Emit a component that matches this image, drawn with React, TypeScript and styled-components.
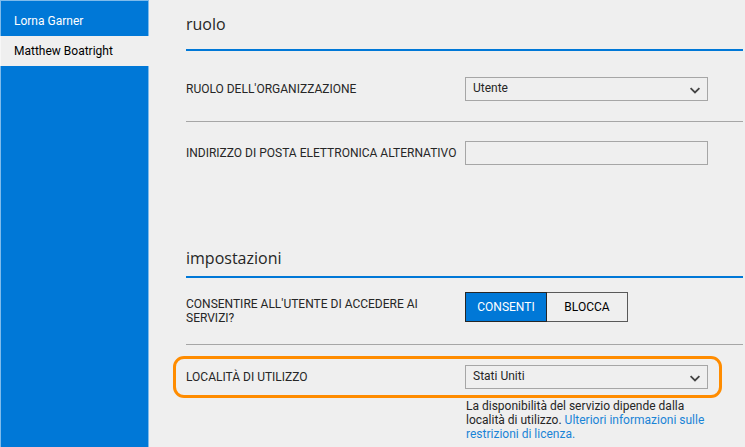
import React, { useState } from "react";
import styled, { createGlobalStyle } from "styled-components";

const GlobalStyle = createGlobalStyle`
  *, *::before, *::after { box-sizing: border-box; }
  html, body { margin: 0; background: #efefef; }
  body, button, input, select {
    font-family: Roboto, "Noto Sans", sans-serif;
    font-size: 12px;
    line-height: 14px;
    color: #262626;
  }
`;

const Page = styled.div`
  display: grid;
  grid-template-columns: 149px minmax(0, 1fr);
  min-height: 100vh;
`;

const Sidebar = styled.nav`
  background: #0078d7;
  border: solid #7fbbeb;
  border-width: 1px 1px 0 1px;
  padding-top: 5px;
`;

const UserLink = styled.a<{ $active?: boolean }>`
  display: block;
  margin: 0 -1px;
  padding: 8px 14px;
  border-left: 1px solid ${(p) => (p.$active ? "#f7f7f7" : "#7fbbeb")};
  border-right: 1px solid ${(p) => (p.$active ? "#efefef" : "#7fbbeb")};
  padding-left: 13px;
  text-decoration: none;
  color: ${(p) => (p.$active ? "#000" : "#fff")};
  background: ${(p) => (p.$active ? "#efefef" : "transparent")};
`;

const Main = styled.main`
  padding: 12px 2px 0 37px;
`;

const Title = styled.h2<{ $gap: number }>`
  margin: 0;
  padding-bottom: ${(p) => p.$gap}px;
  border-bottom: 2px solid #0078d7;
  font-family: "Open Sans", "Noto Sans", sans-serif;
  font-size: 16px;
  line-height: 24px;
  font-weight: 400;
`;

const Section = styled.section`
  & + & {
    margin-top: 81px;
  }
`;

const Row = styled.div<{ $top: number; $bottom?: number }>`
  position: relative;
  display: grid;
  grid-template-columns: 279px minmax(0, 243px);
  align-items: start;
  padding: ${(p) => p.$top}px 0 ${(p) => p.$bottom ?? 0}px;
  border-bottom: ${(p) => (p.$bottom ? "1px solid #a6a6a6" : "none")};
`;

const Highlight = styled.div`
  position: absolute;
  top: 11px;
  left: -13px;
  width: calc(min(100%, 522px) + 27px);
  height: 42px;
  border: 3px solid #ff8c00;
  border-radius: 11px;
  pointer-events: none;
`;

const Label = styled.label`
  padding: 5px 5px 0 0;
`;

const SelectWrap = styled.div`
  position: relative;
`;

const Select = styled.select`
  appearance: none;
  display: block;
  width: 100%;
  height: 24px;
  margin: 0;
  padding: 0 24px 2px 7px;
  border: 1px solid #a6a6a6;
  border-radius: 0;
  background: transparent;
`;

const Chevron = styled.svg`
  position: absolute;
  right: 7px;
  top: 9px;
  pointer-events: none;
`;

const TextInput = styled.input`
  display: block;
  width: 100%;
  height: 24px;
  margin: 0;
  padding: 0 7px;
  border: 1px solid #a6a6a6;
  background: transparent;
`;

const Toggle = styled.div`
  display: grid;
  grid-template-columns: 82px 81px;
`;

const ToggleButton = styled.button<{ $on: boolean }>`
  height: 30px;
  padding: 0;
  border: 1px solid ${(p) => (p.$on ? "#262626" : "#595959")};
  color: ${(p) => (p.$on ? "#fff" : "#000")};
  background: ${(p) => (p.$on ? "#0078d7" : "transparent")};

  & + & {
    border-left-width: 0;
  }
`;

const Hint = styled.p`
  margin: 10px 0 0;
  padding-left: 1px;
`;

const HintLink = styled.a`
  color: #1a84d6;
  text-decoration: none;
`;

function Dropdown({ id, options }: { id: string; options: string[] }) {
  return (
    <SelectWrap>
      <Select id={id}>
        {options.map((o) => (
          <option key={o}>{o}</option>
        ))}
      </Select>
      <Chevron width="12" height="9" viewBox="0 0 12 9" fill="none" aria-hidden="true">
        <path d="M1.6 2.2L6 6.4L10.4 2.2" stroke="#444" strokeWidth="1.8" />
      </Chevron>
    </SelectWrap>
  );
}

export default function App() {
  const [allowed, setAllowed] = useState(true);
  return (
    <Page>
      <GlobalStyle />
      <Sidebar>
        <UserLink href="#lorna">Lorna Garner</UserLink>
        <UserLink href="#matthew" $active aria-current="page">
          Matthew Boatright
        </UserLink>
      </Sidebar>
      <Main>
        <Section>
          <Title $gap={13}>ruolo</Title>
          <Row $top={26} $bottom={20}>
            <Label htmlFor="role">RUOLO DELL'ORGANIZZAZIONE</Label>
            <Dropdown id="role" options={["Utente", "Amministratore"]} />
          </Row>
          <Row $top={19}>
            <Label htmlFor="email">INDIRIZZO DI POSTA ELETTRONICA ALTERNATIVO</Label>
            <TextInput id="email" type="email" />
          </Row>
        </Section>
        <Section>
          <Title $gap={6}>impostazioni</Title>
          <Row $top={14} $bottom={19}>
            <Label as="span" id="access">
              CONSENTIRE ALL'UTENTE DI ACCEDERE AI SERVIZI?
            </Label>
            <Toggle role="group" aria-labelledby="access">
              <ToggleButton type="button" $on={allowed} aria-pressed={allowed} onClick={() => setAllowed(true)}>
                CONSENTI
              </ToggleButton>
              <ToggleButton type="button" $on={!allowed} aria-pressed={!allowed} onClick={() => setAllowed(false)}>
                BLOCCA
              </ToggleButton>
            </Toggle>
          </Row>
          <Row $top={20}>
            <Highlight />
            <Label htmlFor="location">LOCALITÀ DI UTILIZZO</Label>
            <div>
              <Dropdown id="location" options={["Stati Uniti", "Italia"]} />
              <Hint>
                La disponibilità del servizio dipende dalla località di utilizzo.{" "}
                <HintLink href="#licenza">Ulteriori informazioni sulle restrizioni di licenza.</HintLink>
              </Hint>
            </div>
          </Row>
        </Section>
      </Main>
    </Page>
  );
}
